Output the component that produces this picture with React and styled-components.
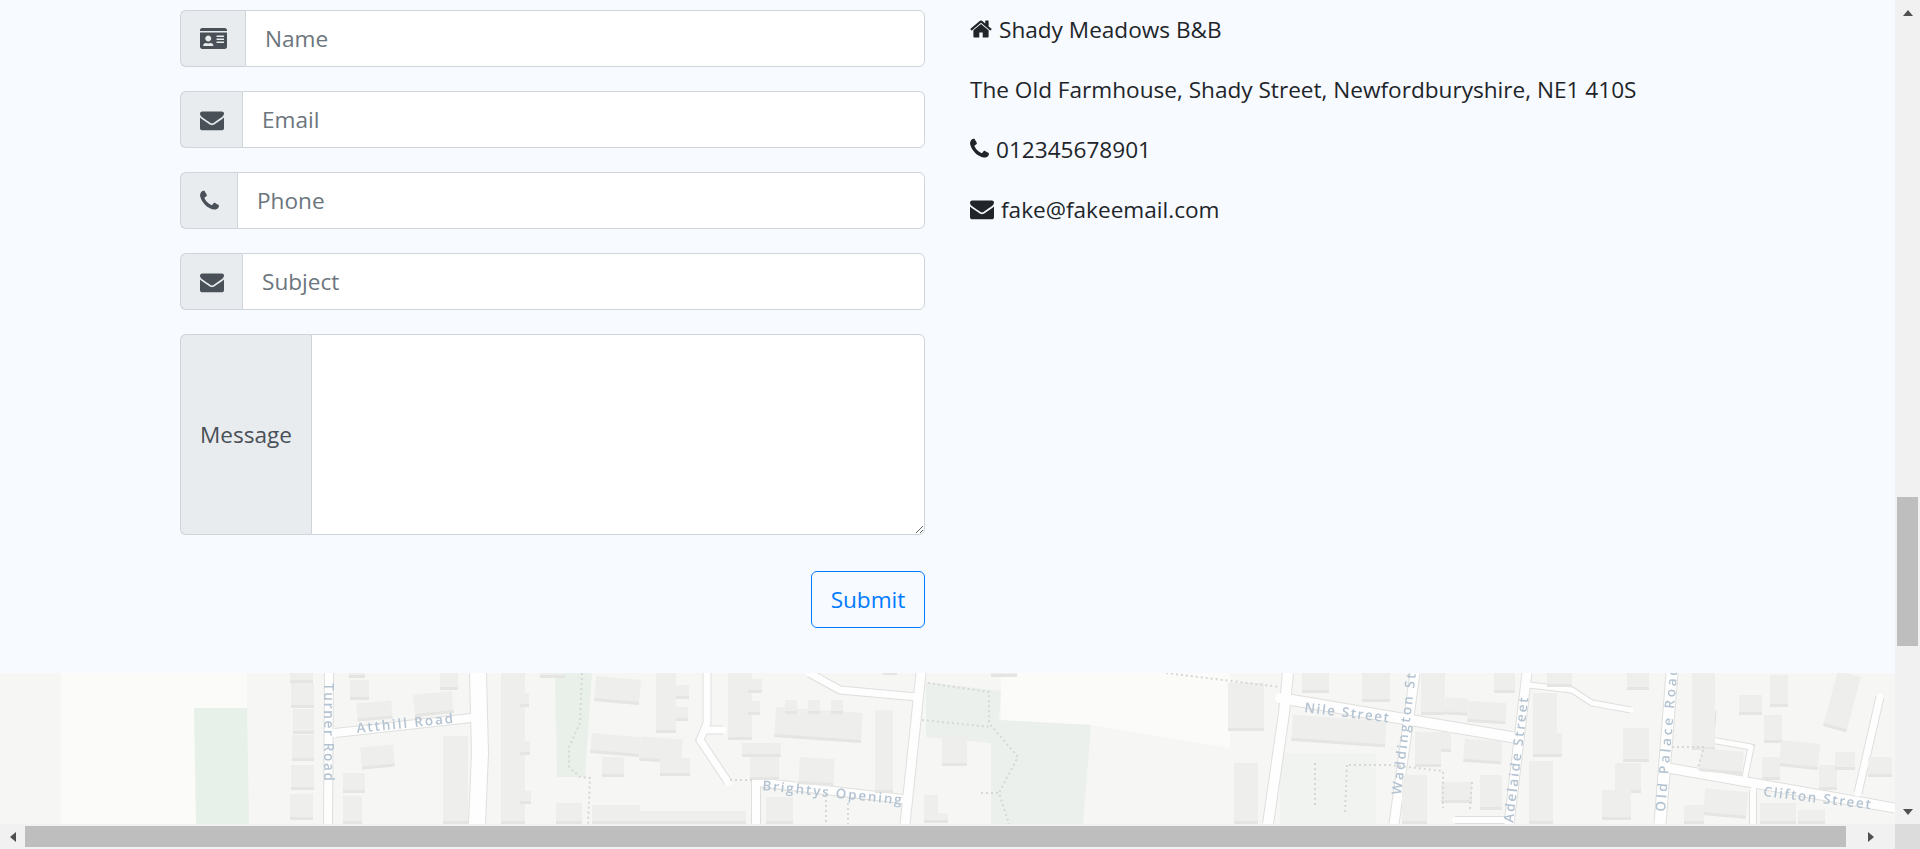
import React from "react";
import styled, { createGlobalStyle } from "styled-components";
import { FaIdCard } from "react-icons/fa";

const GlobalStyle = createGlobalStyle`
  html, body {
    margin: 0;
    height: 100%;
    overflow: hidden;
  }
  body {
    font-family: "Open Sans", "Noto Sans", sans-serif;
    color: #212529;
  }
`;

const Window = styled.div`
  display: grid;
  grid-template-columns: 1fr 25px;
  grid-template-rows: 1fr 25px;
  width: 100vw;
  height: 100vh;
  overflow: hidden;
`;

const Page = styled.main`
  display: flex;
  flex-direction: column;
  min-width: 0;
  min-height: 0;
  overflow: hidden;
`;

const ContactSection = styled.section`
  flex: 0 0 673px;
  box-sizing: border-box;
  display: grid;
  grid-template-columns: 745px 1fr;
  column-gap: 45px;
  padding: 10px 0 0 180px;
  background: #f7faff;
`;

const ContactForm = styled.form`
  display: flex;
  flex-direction: column;
  gap: 24px;
`;

const InputGroup = styled.div`
  display: flex;
  height: ${(p) => p.$height || 57}px;
  box-sizing: border-box;
`;

const Addon = styled.label`
  display: flex;
  align-items: center;
  justify-content: center;
  box-sizing: border-box;
  flex: 0 0 ${(p) => p.$width}px;
  background: #e9ecef;
  border: 1px solid #ced4da;
  border-right: 0;
  border-radius: 6px 0 0 6px;
  color: #495057;
  font-size: 22.6px;
`;

const Field = styled.input`
  flex: 1;
  min-width: 0;
  box-sizing: border-box;
  padding: 0 19px;
  background: #fff;
  border: 1px solid #ced4da;
  border-radius: 0 6px 6px 0;
  color: #495057;
  font: 22.6px "Open Sans", "Noto Sans", sans-serif;
  outline: none;

  &::placeholder {
    color: #6c757d;
    opacity: 1;
  }
`;

const MessageField = styled(Field).attrs({ as: "textarea" })`
  padding: 9px 19px;
  resize: vertical;
`;

const Actions = styled.div`
  display: flex;
  justify-content: flex-end;
  margin-top: 12px;
`;

const SubmitButton = styled.button`
  width: 114px;
  height: 57px;
  padding: 0;
  background: transparent;
  border: 1px solid #007bff;
  border-radius: 6px;
  color: #007bff;
  font: 22.6px "Open Sans", "Noto Sans", sans-serif;
`;

const Address = styled.address`
  display: flex;
  flex-direction: column;
  gap: 24px;
  padding-top: 1px;
  font-style: normal;
`;

const AddressLine = styled.p`
  display: flex;
  align-items: center;
  gap: 7px;
  margin: 0;
  height: 36px;
  font-size: 22.6px;
  white-space: nowrap;
`;

const Glyph = styled.svg`
  display: block;
  flex: none;
  height: ${(p) => p.$h || 24}px;
  fill: currentColor;
`;

const MapPane = styled.div`
  flex: 1;
  min-height: 0;
  overflow: hidden;
  background: #f6f6f4;
`;

const MapDrawing = styled.svg`
  display: block;
  width: 1895px;
  height: 151px;
  filter: blur(0.7px);
`;

const MapLabel = styled.text`
  font-family: "Open Sans", "Noto Sans", sans-serif;
  font-size: 13.5px;
  font-weight: 600;
  fill: #b4c3d1;
`;

const ScrollTrack = styled.div`
  display: flex;
  flex-direction: ${(p) => (p.$vertical ? "column" : "row")};
  align-items: center;
  background: #f1f1f1;
`;

const VerticalThumb = styled.div`
  width: 21px;
  height: 149px;
  margin-top: 472px;
  background: #bebebe;
`;

const HorizontalThumb = styled.div`
  width: 1821px;
  height: 21px;
  background: #bebebe;
`;

const ArrowBox = styled.div`
  display: flex;
  align-items: center;
  justify-content: center;
  flex: 0 0 ${(p) => p.$size || 25}px;
  width: ${(p) => (p.$vertical ? "25px" : "auto")};
  height: ${(p) => (p.$vertical ? "auto" : "25px")};
  margin-top: ${(p) => (p.$push ? "auto" : 0)};
  margin-left: ${(p) => (p.$pushLeft ? "auto" : 0)};
`;

const Arrow = styled.svg`
  display: block;
  fill: #505050;
`;

const Corner = styled.div`
  background: #dcdcdc;
`;

const PHONE =
  "M1600 1240q0 27-10 70.5t-21 68.5q-21 50-122 106-94 51-186 51-27 0-53-3.5t-57.5-12.5-47-14.5-55.5-20.5-49-18q-98-35-175-83-127-79-264-216t-216-264q-48-77-83-175-3-9-18-49t-20.5-55.5-14.5-47-12.5-57.5-3.5-53q0-92 51-186 56-101 106-122 25-11 68.5-21t70.5-10q14 0 21 3 18 6 53 76 11 19 30 54t35 63.5 31 53.5q3 4 17.5 25t21.5 35.5 7 28.5q0 20-28.5 50t-62 55-62 53-28.5 46q0 9 5 22.5t8.5 20.5 14 24 11.5 19q76 137 174 235t235 174q2 1 19 11.5t24 14 20.5 8.5 22.5 5q18 0 46-28.5t53-62 55-62 50-28.5q14 0 28.5 7t35.5 21.5 25 17.5q25 15 53.5 31t63.5 35 54 30q70 35 76 53 3 7 3 21z";
const ENVELOPE =
  "M1792 710v794q0 66-47 113t-113 47h-1472q-66 0-113-47t-47-113v-794q44 49 101 87 362 246 497 345 57 42 92.5 65.5t94.5 48 110 24.5h2q51 0 110-24.5t94.5-48 92.5-65.5q170-123 498-345 57-39 100-87zm0-294q0 79-49 151t-122 123q-376 261-468 325-10 7-42.5 30.5t-54 38-52 32.5-57.5 27-50 9h-2q-23 0-50-9t-57.5-27-52-32.5-54-38-42.5-30.5q-91-64-262-182.5t-205-142.5q-62-42-117-115.5t-55-136.5q0-78 41.5-130t118.5-52h1472q65 0 112.5 46t47.5 111z";
const HOME =
  "M1472 992v480q0 26-19 45t-45 19h-384v-384h-256v384h-384q-26 0-45-19t-19-45v-480q0-1 .5-3t.5-3l575-474 575 474q1 2 1 6zm223-69l-62 74q-8 9-21 11h-3q-13 0-21-7l-692-577-692 577q-12 8-24 7-13-2-21-11l-62-74q-8-10-7-23.5t11-21.5l719-597q32-26 76-26t76 26l244 204v-195q0-14 9-23t23-9h192q14 0 23 9t9 23v408l219 182q10 8 11 21.5t-7 23.5z";

const PhoneIcon = () => (
  <Glyph viewBox="192 0 1408 1792" width="19">
    <path d={PHONE} />
  </Glyph>
);
const EnvelopeIcon = () => (
  <Glyph viewBox="0 0 1792 1792" width="24">
    <path d={ENVELOPE} />
  </Glyph>
);
const HomeIcon = () => (
  <Glyph viewBox="64 0 1664 1792" width="22">
    <path d={HOME} />
  </Glyph>
);

// map shapes, x/y are pixels inside the map strip
const LIGHT_AREAS = [
  "61,0 247,0 247,151 61,151",
  "1001,0 1230,0 1230,75 1091,52 1001,47",
];
const GREEN_AREAS = [
  ["194,35 247,35 249,151 196,151", "#e7f0e9"],
  ["555,0 592,0 585,104 557,104", "#e9f0ea"],
  ["926,9 1001,18 999,47 1091,52 1083,151 991,151 991,70 926,64", "#ecf0ec"],
  ["1280,80 1376,80 1376,151 1280,151", "#f0f3ef"],
];
const BUILDINGS = [
  [290, 0, 23, 10], [291, 10, 23, 25], [293, 36, 21, 25], [292, 62, 22, 26], [291, 92, 23, 25], [290, 121, 23, 26],
  [349, 0, 16, 5], [350, 7, 19, 20, 0], [357, 29, 35, 18, -5], [414, 20, 39, 22, -6], [440, 0, 18, 17],
  [361, 73, 33, 22, -5], [343, 100, 22, 20], [343, 123, 19, 28], [443, 63, 25, 88],
  [501, 0, 24, 151], [520, 118, 11, 13], [520, 68, 10, 14], [520, 20, 9, 14],
  [540, 0, 25, 5], [595, 5, 45, 25, 5], [591, 62, 49, 20, 5], [602, 84, 22, 20], [556, 130, 26, 21], [592, 132, 48, 19],
  [656, 0, 20, 60], [676, 12, 13, 14], [676, 34, 12, 14], [640, 65, 42, 24, 4], [660, 85, 30, 18], [728, 0, 24, 67], [748, 6, 14, 14], [748, 28, 12, 14], [742, 70, 39, 14], [750, 84, 29, 23],
  [775, 37, 87, 30, 4], [785, 27, 12, 14], [808, 27, 12, 14], [831, 27, 12, 14],
  [799, 85, 35, 27, 3], [875, 37, 18, 83], [883, 0, 14, 2], [640, 138, 106, 13], [766, 124, 27, 27],
  [924, 122, 14, 28], [924, 140, 24, 10], [942, 62, 25, 31], [991, 0, 26, 4], [1228, 10, 36, 48], [1234, 90, 24, 61],
  [1302, 0, 27, 20], [1362, 0, 28, 29], [1421, 0, 24, 42], [1445, 25, 23, 17, 4], [1468, 29, 38, 21, 4], [1494, 0, 21, 20], [1547, 0, 25, 14], [1627, 0, 22, 17],
  [1533, 20, 24, 64], [1554, 60, 8, 24], [1529, 88, 24, 63], [1292, 45, 94, 26, 4], [1415, 59, 26, 35], [1441, 59, 10, 20], [1464, 67, 38, 23, 4], [1402, 102, 25, 49],
  [1441, 109, 31, 21], [1480, 102, 22, 35], [1623, 55, 26, 34], [1615, 90, 26, 30], [1602, 117, 29, 30],
  [1692, 0, 23, 77], [1700, 77, 43, 23, 5], [1739, 22, 23, 20], [1770, 2, 18, 32], [1764, 42, 18, 28], [1780, 69, 39, 26, 6],
  [1762, 84, 18, 23], [1819, 92, 18, 25], [1835, 79, 20, 18], [1830, 0, 24, 57, 15], [1868, 84, 24, 20],
  [1704, 117, 43, 27, 5], [1760, 130, 36, 21], [1798, 137, 27, 14], [1684, 132, 20, 19],
];
const ROADS = [
  ["329,0 328,151", 8],
  ["335,60 471,45", 8],
  ["478,0 480,80 477,151", 16],
  ["707,0 707,50 700,67 728,109", 7],
  ["707,57 723,57", 7],
  ["809,0 840,17 917,24", 7],
  ["921,0 905,151", 9],
  ["756,151 756,109 903,126", 8],
  ["1288,0 1284,40 1268,151", 10],
  ["1280,25 1517,65", 10],
  ["1415,0 1394,151", 9],
  ["1527,0 1509,151", 9],
  ["1529,12 1572,17 1592,30 1631,37", 5],
  ["1672,0 1660,151", 11],
  ["1668,95 1895,135", 9],
  ["1713,37 1711,67 1751,74 1745,104", 5],
  ["1880,24 1858,120", 7],
  ["1753,117 1753,151", 6],
  ["1455,147 1505,147", 6],
];
const FOOTPATHS = [
  "582,0 580,50 569,74 569,94 580,104 590,105 588,151",
  "730,107 754,107",
  "826,127 826,151",
  "848,130 848,151",
  "928,10 989,19 989,50 1018,84 999,120 1009,151",
  "922,47 991,54",
  "981,120 999,120",
  "1166,0 1280,14",
  "1672,74 1704,74 1698,95",
  "1349,92 1390,92 1443,98 1443,135",
  "1472,109 1470,136",
  "1315,90 1315,135",
  "1347,92 1345,140",
];
const LABELS = [
  { text: "Atthill Road", x: 357, y: 60, width: 97, angle: -6 },
  { text: "Turner Road", x: 324, y: 10, width: 98, angle: 90 },
  { text: "Brightys Opening", x: 762, y: 117, width: 140, angle: 6 },
  { text: "Nile Street", x: 1304, y: 39, width: 85, angle: 7 },
  { text: "Waddington St", x: 1401, y: 122, width: 122, angle: -83 },
  { text: "Adelaide Street", x: 1513, y: 150, width: 126, angle: -83 },
  { text: "Old Palace Road", x: 1665, y: 139, width: 145, angle: -85 },
  { text: "Clifton Street", x: 1763, y: 123, width: 108, angle: 7 },
];

const MapStrip = () => (
  <MapPane>
    <MapDrawing viewBox="0 0 1895 151">
      {LIGHT_AREAS.map((points) => (
        <polygon key={points} points={points} fill="#fbfbf9" />
      ))}
      {GREEN_AREAS.map(([points, color]) => (
        <polygon key={points} points={points} fill={color} />
      ))}
      {ROADS.map(([points, width]) => (
        <polyline key={points} points={points} fill="none" stroke="#dfdfdd" strokeWidth={width + 2} />
      ))}
      {ROADS.map(([points, width]) => (
        <polyline key={points} points={points} fill="none" stroke="#fefefe" strokeWidth={width} strokeLinecap="round" strokeLinejoin="round" />
      ))}
      {BUILDINGS.map(([x, y, w, h, angle = 0]) => (
        <g key={`${x}-${y}`} transform={`rotate(${angle} ${x + w / 2} ${y + h / 2})`}>
          <rect x={x} y={y} width={w} height={h} fill="#eeeeed" />
          <rect x={x} y={y + h - 3} width={w} height={3} fill="#e5e5e3" />
        </g>
      ))}
      {FOOTPATHS.map((points) => (
        <polyline key={points} points={points} fill="none" stroke="#d5d8d5" strokeWidth="2" strokeDasharray="2 3" />
      ))}
      {LABELS.map(({ text, x, y, width, angle }) => (
        <MapLabel key={text} x={x} y={y} textLength={width} transform={`rotate(${angle} ${x} ${y})`}>
          {text}
        </MapLabel>
      ))}
    </MapDrawing>
  </MapPane>
);

export default function App() {
  return (
    <>
      <GlobalStyle />
      <Window>
        <Page>
          <ContactSection>
            <ContactForm onSubmit={(e) => e.preventDefault()}>
              <InputGroup>
                <Addon $width={65}>
                  <FaIdCard size={27} />
                </Addon>
                <Field placeholder="Name" />
              </InputGroup>
              <InputGroup>
                <Addon $width={62}>
                  <EnvelopeIcon />
                </Addon>
                <Field placeholder="Email" />
              </InputGroup>
              <InputGroup>
                <Addon $width={57}>
                  <PhoneIcon />
                </Addon>
                <Field placeholder="Phone" />
              </InputGroup>
              <InputGroup>
                <Addon $width={62}>
                  <EnvelopeIcon />
                </Addon>
                <Field placeholder="Subject" />
              </InputGroup>
              <InputGroup $height={201}>
                <Addon $width={131}>Message</Addon>
                <MessageField />
              </InputGroup>
              <Actions>
                <SubmitButton type="submit">Submit</SubmitButton>
              </Actions>
            </ContactForm>
            <Address>
              <AddressLine>
                <HomeIcon />
                Shady Meadows B&amp;B
              </AddressLine>
              <AddressLine>The Old Farmhouse, Shady Street, Newfordburyshire, NE1 410S</AddressLine>
              <AddressLine>
                <PhoneIcon />
                012345678901
              </AddressLine>
              <AddressLine>
                <EnvelopeIcon />
                fake@fakeemail.com
              </AddressLine>
            </Address>
          </ContactSection>
          <MapStrip />
        </Page>
        <ScrollTrack $vertical>
          <ArrowBox $vertical>
            <Arrow width="10" height="6" viewBox="0 0 10 6">
              <polygon points="5,0 10,6 0,6" />
            </Arrow>
          </ArrowBox>
          <VerticalThumb />
          <ArrowBox $vertical $push>
            <Arrow width="10" height="6" viewBox="0 0 10 6">
              <polygon points="0,0 10,0 5,6" />
            </Arrow>
          </ArrowBox>
        </ScrollTrack>
        <ScrollTrack>
          <ArrowBox>
            <Arrow width="6" height="10" viewBox="0 0 6 10">
              <polygon points="6,0 6,10 0,5" />
            </Arrow>
          </ArrowBox>
          <HorizontalThumb />
          <ArrowBox $size={49} $pushLeft>
            <Arrow width="6" height="10" viewBox="0 0 6 10">
              <polygon points="0,0 6,5 0,10" />
            </Arrow>
          </ArrowBox>
        </ScrollTrack>
        <Corner />
      </Window>
    </>
  );
}
